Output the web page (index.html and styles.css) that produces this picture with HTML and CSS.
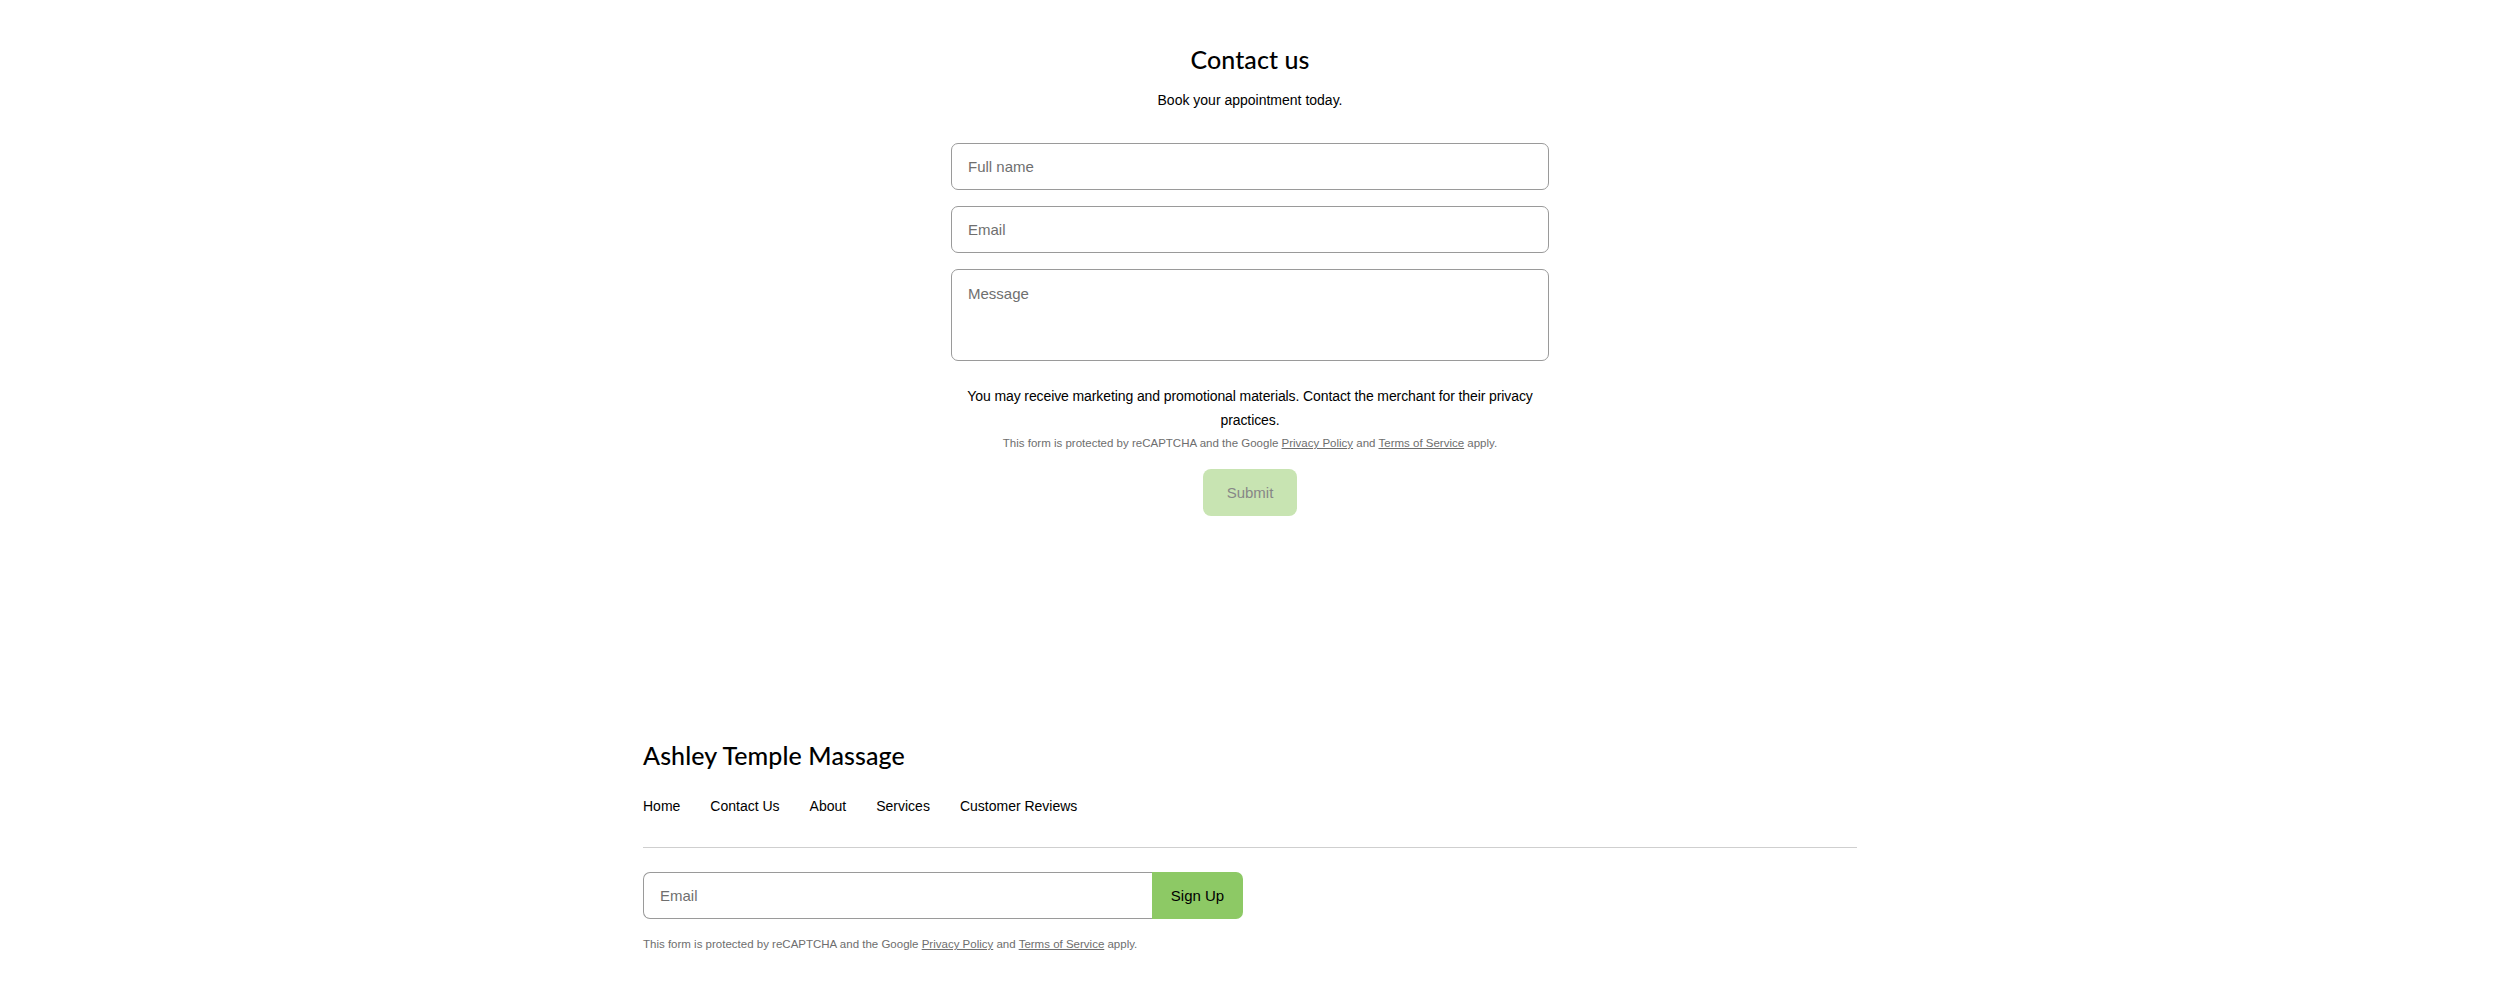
FILE: index.html
```html
<!DOCTYPE html>
<html lang="en">
<head>
<meta charset="utf-8">
<title>Contact us - Ashley Temple Massage</title>
<link rel="stylesheet" href="styles.css">
</head>
<body>
<main class="contact">
  <h2 class="contact-title">Contact us</h2>
  <p class="contact-sub">Book your appointment today.</p>
  <form class="contact-form">
    <input class="field" type="text" placeholder="Full name">
    <input class="field" type="email" placeholder="Email">
    <textarea class="field field-area" placeholder="Message"></textarea>
    <p class="notice">You may receive marketing and promotional materials. Contact the merchant for their privacy practices.</p>
    <p class="captcha">This form is protected by reCAPTCHA and the Google <a href="#">Privacy Policy</a> and <a href="#">Terms of Service</a> apply.</p>
    <button class="submit" type="button">Submit</button>
  </form>
</main>
<footer class="footer">
  <div class="footer-inner">
    <div class="brand">Ashley Temple Massage</div>
    <nav class="nav">
      <a href="#">Home</a>
      <a href="#">Contact Us</a>
      <a href="#">About</a>
      <a href="#">Services</a>
      <a href="#">Customer Reviews</a>
    </nav>
    <hr class="divider">
    <form class="signup">
      <input class="signup-input" type="email" placeholder="Email">
      <button class="signup-btn" type="button">Sign Up</button>
    </form>
    <p class="captcha captcha-left">This form is protected by reCAPTCHA and the Google <a href="#">Privacy Policy</a> and <a href="#">Terms of Service</a> apply.</p>
  </div>
</footer>
</body>
</html>
```
FILE: styles.css
```css
* { box-sizing: border-box; }
html, body { margin: 0; padding: 0; background: #fff; }
body {
  font-family: "Liberation Sans", Arial, sans-serif;
  color: #000;
}
.contact {
  display: flex;
  flex-direction: column;
  align-items: center;
  padding-top: 43px;
}
.contact-title {
  margin: 0;
  font-family: Lato, "Noto Sans", sans-serif;
  font-weight: 500;
  font-size: 25px;
  line-height: 32px;
  letter-spacing: 0.1px;
}
.contact-sub {
  margin: 15px 0 0;
  font-size: 14px;
  line-height: 20px;
}
.contact-form {
  width: 598px;
  margin-top: 33px;
  display: flex;
  flex-direction: column;
  align-items: center;
}
.field {
  width: 100%;
  height: 47px;
  border: 1px solid #9a9a9a;
  border-radius: 7px;
  padding: 0 16px;
  font-family: "Liberation Sans", Arial, sans-serif;
  font-size: 15px;
  color: #000;
  background: #fff;
  margin: 0 0 16px;
  outline: none;
}
.field::placeholder { color: #6f6f6f; }
.field-area {
  height: 92px;
  padding-top: 15px;
  resize: none;
  margin-bottom: 23px;
}
.notice {
  margin: 0;
  font-size: 14px;
  line-height: 24px;
  letter-spacing: -0.1px;
  text-align: center;
}
.captcha {
  margin: 3px 0 0;
  font-size: 11.5px;
  line-height: 16px;
  color: #6e6e6e;
  text-align: center;
}
.captcha a { color: #6e6e6e; text-decoration: underline; }
.submit {
  margin-top: 18px;
  width: 94px;
  height: 47px;
  border: none;
  border-radius: 8px;
  background: #c8e4b2;
  color: #878787;
  font-family: "Liberation Sans", Arial, sans-serif;
  font-size: 15px;
}
.footer {
  margin-top: 223px;
  display: flex;
  justify-content: center;
}
.footer-inner {
  width: 1214px;
  padding-bottom: 40px;
}
.brand {
  font-family: Lato, "Noto Sans", sans-serif;
  font-weight: 500;
  font-size: 25px;
  line-height: 32px;
  letter-spacing: 0.1px;
}
.nav {
  margin-top: 25px;
  display: flex;
  gap: 30px;
}
.nav a {
  color: #000;
  text-decoration: none;
  font-size: 14px;
  line-height: 20px;
}
.divider {
  margin: 31px 0 0;
  border: none;
  border-top: 1px solid #cfcfcf;
}
.signup {
  margin-top: 24px;
  display: flex;
  width: 600px;
  height: 47px;
}
.signup-input {
  width: 509px;
  height: 100%;
  border: 1px solid #9a9a9a;
  border-right: none;
  border-radius: 7px 0 0 7px;
  padding: 0 16px;
  font-family: "Liberation Sans", Arial, sans-serif;
  font-size: 15px;
  outline: none;
}
.signup-input::placeholder { color: #6f6f6f; }
.signup-btn {
  width: 91px;
  height: 100%;
  border: none;
  border-radius: 0 7px 7px 0;
  background: #8dc965;
  color: #000;
  font-family: "Liberation Sans", Arial, sans-serif;
  font-size: 15px;
}
.captcha-left {
  margin-top: 17px;
  text-align: left;
}
```
